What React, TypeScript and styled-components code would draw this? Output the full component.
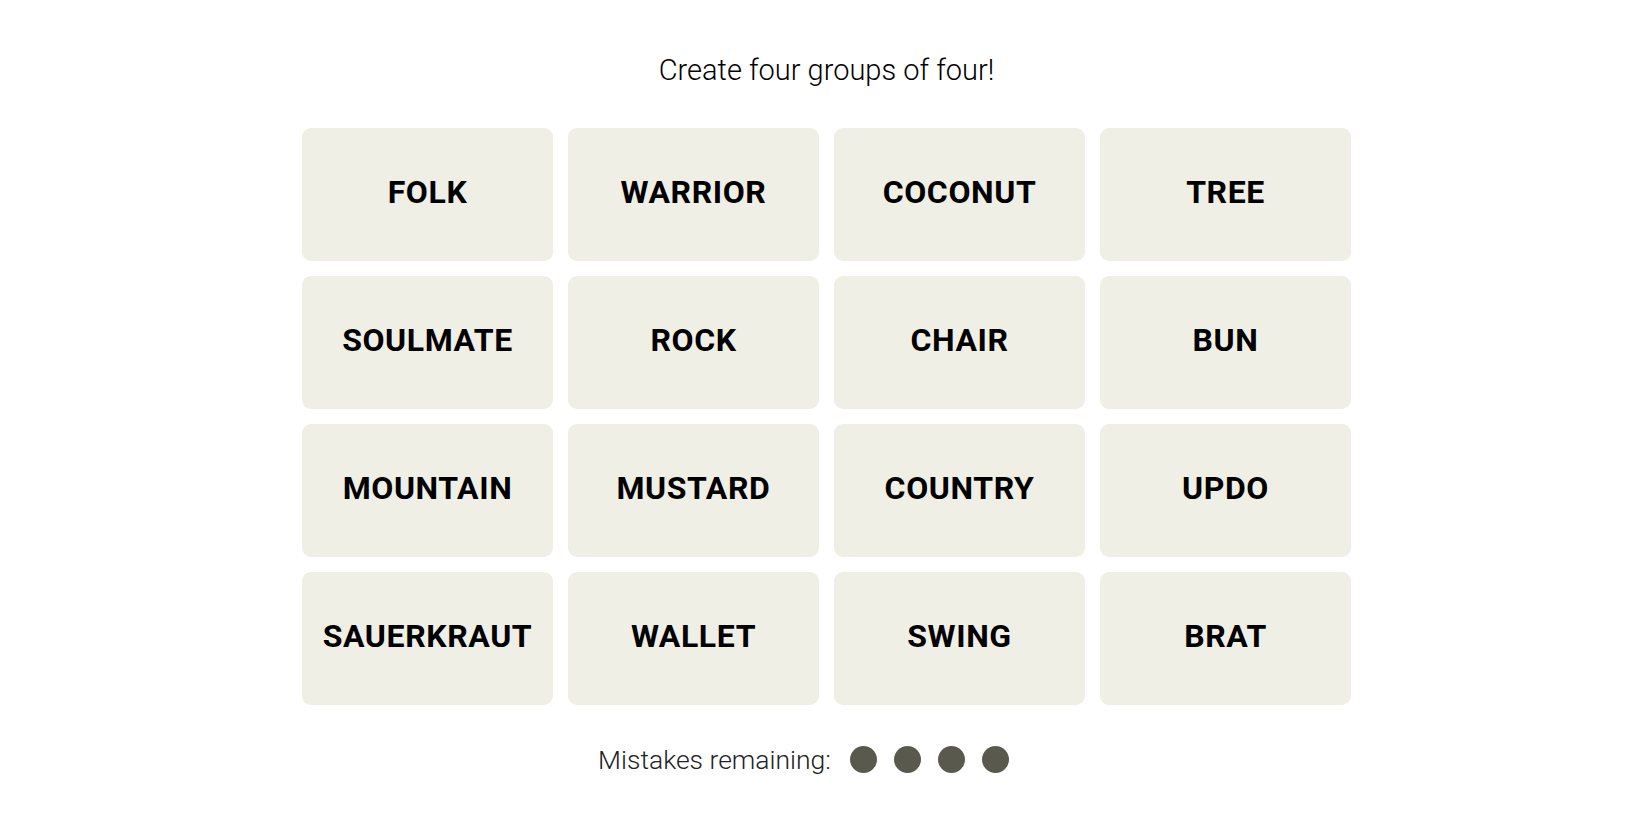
import React from "react";
import styled, { createGlobalStyle } from "styled-components";

const GlobalStyle = createGlobalStyle`
  html, body {
    margin: 0;
    padding: 0;
    background: #ffffff;
  }
  body {
    font-family: Roboto, "Liberation Sans", sans-serif;
  }
`;

const Page = styled.main`
  display: flex;
  flex-direction: column;
  align-items: center;
  padding-top: 53px;
  padding-left: 3px;
`;

const Title = styled.h2`
  margin: 0 0 41px;
  font-family: Roboto, "Liberation Sans", sans-serif;
  font-weight: 300;
  font-size: 29px;
  line-height: 34px;
  color: #000;
`;

const Grid = styled.div`
  display: grid;
  grid-template-columns: repeat(4, 251px);
  grid-auto-rows: 133px;
  gap: 15px;
`;

const Tile = styled.button`
  display: flex;
  align-items: center;
  justify-content: center;
  border: none;
  border-radius: 9px;
  background: #efefe6;
  color: #000;
  font-family: Roboto, "Liberation Sans", sans-serif;
  font-weight: 700;
  font-size: 32px;
  letter-spacing: 0.6px;
  text-transform: uppercase;
  padding: 0 0 5px;
  cursor: pointer;
`;

const Mistakes = styled.div`
  display: flex;
  align-items: center;
  margin-top: 39px;
  padding-right: 46px;
  gap: 19px;
`;

const MistakesLabel = styled.span`
  font-family: Roboto, "Liberation Sans", sans-serif;
  font-weight: 300;
  font-size: 26.5px;
  color: #222;
`;

const Dots = styled.div`
  display: flex;
  gap: 17px;
`;

const Dot = styled.span`
  width: 27px;
  height: 27px;
  border-radius: 50%;
  background: #5a594e;
`;

const words = [
  "FOLK", "WARRIOR", "COCONUT", "TREE",
  "SOULMATE", "ROCK", "CHAIR", "BUN",
  "MOUNTAIN", "MUSTARD", "COUNTRY", "UPDO",
  "SAUERKRAUT", "WALLET", "SWING", "BRAT",
];

export default function App() {
  return (
    <>
      <GlobalStyle />
      <Page>
        <Title>Create four groups of four!</Title>
        <Grid>
          {words.map((w) => (
            <Tile key={w}>{w}</Tile>
          ))}
        </Grid>
        <Mistakes>
          <MistakesLabel>Mistakes remaining:</MistakesLabel>
          <Dots>
            {[0, 1, 2, 3].map((i) => (
              <Dot key={i} />
            ))}
          </Dots>
        </Mistakes>
      </Page>
    </>
  );
}
